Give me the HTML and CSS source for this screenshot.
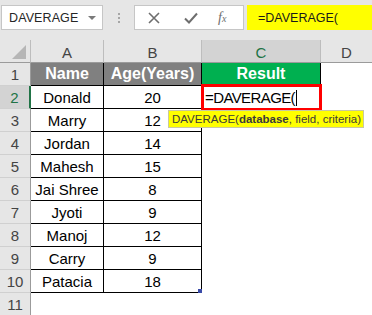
FILE: index.html
```html
<!DOCTYPE html>
<html>
<head>
<meta charset="utf-8">
<link rel="stylesheet" href="styles.css">
</head>
<body>
<div class="app">
  <div class="toolbar">
    <div class="namebox">
      <span class="namebox-text">DAVERAGE</span>
      <span class="namebox-arrow"></span>
    </div>
    <div class="grip"><i></i><i></i><i></i></div>
    <div class="buttons">
      <svg class="btn-icon" width="14" height="14" viewBox="0 0 14 14"><path d="M2 2 L12 12 M12 2 L2 12" stroke="#6e6e6e" stroke-width="1.6" fill="none"/></svg>
      <svg class="btn-icon" width="16" height="14" viewBox="0 0 16 14"><path d="M2 7.5 L6 11.5 L14 2.5" stroke="#6e6e6e" stroke-width="2" fill="none"/></svg>
      <span class="fx">f<span class="fx-x">x</span></span>
    </div>
    <div class="formula">=DAVERAGE(</div>
  </div>

  <div class="sheet">
    <div class="hd corner"><span class="tri"></span></div>
    <div class="hd col">A</div>
    <div class="hd col">B</div>
    <div class="hd col sel">C</div>
    <div class="hd col last">D</div>

    <div class="hd row">1</div>
    <div class="c title">Name</div>
    <div class="c title">Age(Years)</div>
    <div class="c result">Result</div>
    <div class="c empty"></div>

    <div class="hd row rsel">2</div>
    <div class="c d">Donald</div>
    <div class="c d">20</div>
    <div class="c active"><span class="active-text">=DAVERAGE(</span><span class="caret"></span>
      <div class="tip">DAVERAGE(<b>database</b>, field, criteria)</div>
    </div>
    <div class="c empty"></div>

    <div class="hd row">3</div>
    <div class="c d">Marry</div>
    <div class="c d">12</div>
    <div class="c empty"></div>
    <div class="c empty"></div>

    <div class="hd row">4</div>
    <div class="c d">Jordan</div>
    <div class="c d">14</div>
    <div class="c empty"></div>
    <div class="c empty"></div>

    <div class="hd row">5</div>
    <div class="c d">Mahesh</div>
    <div class="c d">15</div>
    <div class="c empty"></div>
    <div class="c empty"></div>

    <div class="hd row">6</div>
    <div class="c d">Jai Shree</div>
    <div class="c d">8</div>
    <div class="c empty"></div>
    <div class="c empty"></div>

    <div class="hd row">7</div>
    <div class="c d">Jyoti</div>
    <div class="c d">9</div>
    <div class="c empty"></div>
    <div class="c empty"></div>

    <div class="hd row">8</div>
    <div class="c d">Manoj</div>
    <div class="c d">12</div>
    <div class="c empty"></div>
    <div class="c empty"></div>

    <div class="hd row">9</div>
    <div class="c d">Carry</div>
    <div class="c d">9</div>
    <div class="c empty"></div>
    <div class="c empty"></div>

    <div class="hd row">10</div>
    <div class="c d">Patacia</div>
    <div class="c d handle-cell">18<span class="handle"></span></div>
    <div class="c empty"></div>
    <div class="c empty"></div>

    <div class="hd row">11</div>
    <div class="c blank"></div>
    <div class="c blank"></div>
    <div class="c blank"></div>
    <div class="c blank"></div>
  </div>
</div>
</body>
</html>
```

FILE: styles.css
```css
* { box-sizing: border-box; }
html, body { margin: 0; padding: 0; }
body {
  width: 372px;
  height: 315px;
  overflow: hidden;
  background: #ffffff;
  font-family: "Liberation Sans", Arial, sans-serif;
}
.app { width: 372px; }

.toolbar {
  height: 40px;
  background: #e6e6e6;
  display: flex;
  align-items: flex-start;
  padding-top: 5px;
}
.namebox {
  margin-left: 1px;
  width: 102px;
  height: 25px;
  background: #fff;
  border: 1px solid #c6c6c6;
  display: flex;
  align-items: center;
  padding-left: 7px;
  position: relative;
}
.namebox-text {
  font-size: 12.5px;
  color: #262626;
  letter-spacing: 0.1px;
}
.namebox-arrow {
  position: absolute;
  right: 6px;
  top: 10px;
  border-left: 4px solid transparent;
  border-right: 4px solid transparent;
  border-top: 4px solid #7a7a7a;
}
.grip {
  width: 31px;
  height: 25px;
  display: flex;
  flex-direction: column;
  align-items: center;
  justify-content: center;
  gap: 2px;
}
.grip i {
  display: block;
  width: 2px;
  height: 2px;
  background: #a6a6a6;
}
.buttons {
  width: 110px;
  height: 25px;
  background: #fff;
  border: 1px solid #c6c6c6;
  display: flex;
  align-items: center;
  padding-left: 12px;
  gap: 22px;
}
.btn-icon { display: block; }
.fx {
  font-family: "Liberation Serif", "Times New Roman", serif;
  font-style: italic;
  font-size: 14px;
  color: #6e6e6e;
  margin-left: -3px;
}
.fx-x { font-size: 10px; }
.formula {
  margin-left: 3px;
  flex: 1;
  height: 25px;
  background: #ffff00;
  font-size: 12.5px;
  color: #1a1a1a;
  display: flex;
  align-items: center;
  padding-left: 11px;
}

.sheet {
  display: grid;
  grid-template-columns: 31px 73px 98px 119px 51px;
  grid-template-rows: repeat(12, 23px);
  background: #fff;
}
.hd {
  background: #e6e6e6;
  color: #444;
  font-size: 15px;
  display: flex;
  align-items: center;
  justify-content: center;
  border-right: 1px solid #bdbdbd;
  border-bottom: 1px solid #bdbdbd;
}
.hd.col { border-bottom-color: #9b9b9b; padding-top: 2px; }
.hd.col.last { border-right: none; }
.hd.sel {
  background: #d3d3d3;
  color: #217346;
}
.hd.row { border-bottom-color: #d0d0d0; border-right-color: #9b9b9b; }
.hd.rsel {
  background: #d3d3d3;
  color: #217346;
  border-right: 2px solid #217346;
}
.corner { position: relative; border-bottom-color: #9b9b9b; }
.tri {
  position: absolute;
  right: 4px;
  bottom: 3px;
  width: 0;
  height: 0;
  border-left: 14px solid transparent;
  border-bottom: 14px solid #b6b6b6;
}

.c {
  font-size: 15px;
  color: #000;
  display: flex;
  align-items: center;
  justify-content: center;
  position: relative;
}
.c.d {
  border-right: 1px solid #000;
  border-bottom: 1px solid #000;
}
.c.title {
  background: #808080;
  color: #fff;
  font-weight: bold;
  font-size: 16px;
  border-right: 1px solid #000;
  border-bottom: 1px solid #000;
}
.c.result {
  background: #00b050;
  color: #fff;
  font-weight: bold;
  font-size: 16px;
  border-right: 1px solid #000;
  border-bottom: 1px solid #000;
}
.c.active {
  justify-content: flex-start;
  padding-left: 3px;
  border-right: 1px solid #000;
}
.c.active::after {
  content: "";
  position: absolute;
  left: -1px;
  top: -2px;
  right: -2px;
  bottom: -2px;
  border: 3px solid #ff0000;
  z-index: 2;
}
.active-text { font-size: 15px; color: #000; letter-spacing: -0.6px; }
.caret {
  display: inline-block;
  width: 1px;
  height: 16px;
  background: #000;
  margin-left: 1px;
}
.tip {
  position: absolute;
  left: -34px;
  top: 24px;
  width: 196px;
  height: 18px;
  background: #ffff00;
  border: 1px solid #c9c9a0;
  font-size: 11.5px;
  color: #3a3a3a;
  display: flex;
  align-items: center;
  padding-left: 3px;
  white-space: nowrap;
  z-index: 3;
}
.tip b { font-weight: bold; }
.handle {
  position: absolute;
  right: -1px;
  bottom: -1px;
  width: 4px;
  height: 4px;
  background: #3a4aa8;
}
```
